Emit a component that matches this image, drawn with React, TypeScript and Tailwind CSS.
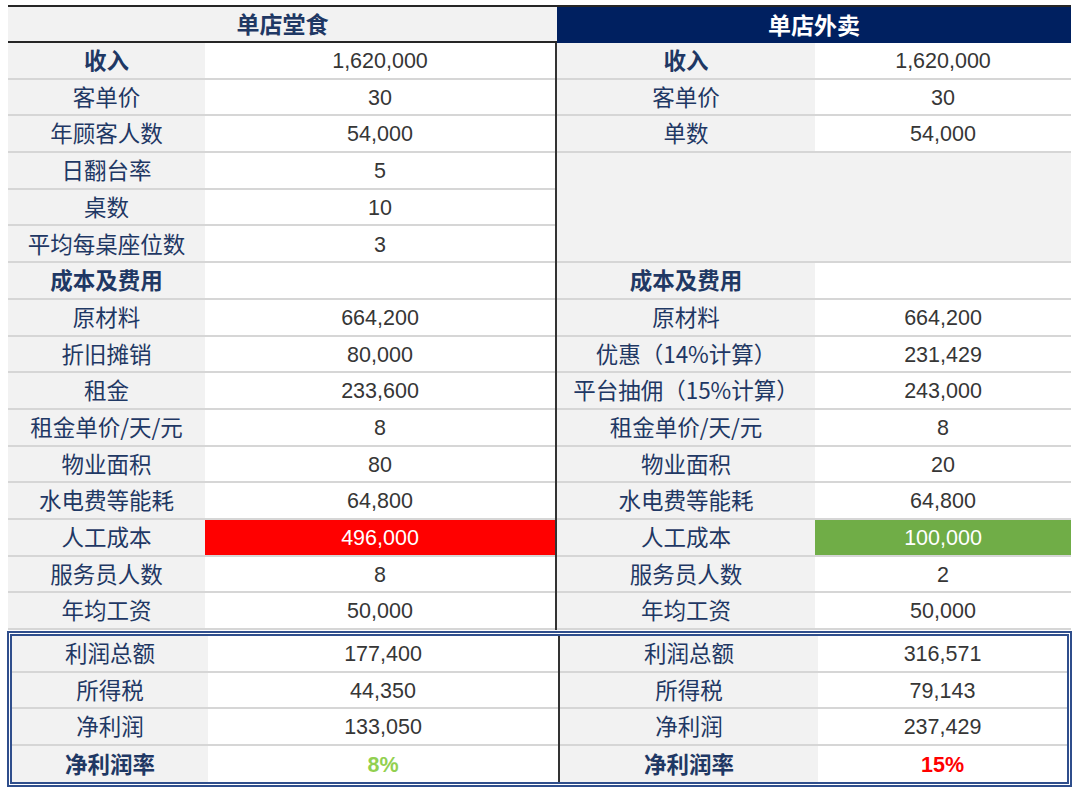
import React from "react";

type Row = {
  label?: string;
  value?: string;
  bold?: boolean;
  cell?: string;
  valueCls?: string;
};

const leftRows: Row[] = [
  { label: "收入", value: "1,620,000", bold: true },
  { label: "客单价", value: "30" },
  { label: "年顾客人数", value: "54,000" },
  { label: "日翻台率", value: "5" },
  { label: "桌数", value: "10" },
  { label: "平均每桌座位数", value: "3" },
  { label: "成本及费用", value: "", bold: true },
  { label: "原材料", value: "664,200" },
  { label: "折旧摊销", value: "80,000" },
  { label: "租金", value: "233,600" },
  { label: "租金单价/天/元", value: "8" },
  { label: "物业面积", value: "80" },
  { label: "水电费等能耗", value: "64,800" },
  { label: "人工成本", value: "496,000", cell: "bg-[#ff0000] text-white" },
  { label: "服务员人数", value: "8" },
  { label: "年均工资", value: "50,000" },
];

const rightRows: Row[] = [
  { label: "收入", value: "1,620,000", bold: true },
  { label: "客单价", value: "30" },
  { label: "单数", value: "54,000" },
  { label: "成本及费用", value: "", bold: true },
  { label: "原材料", value: "664,200" },
  { label: "优惠（14%计算）", value: "231,429" },
  { label: "平台抽佣（15%计算）", value: "243,000" },
  { label: "租金单价/天/元", value: "8" },
  { label: "物业面积", value: "20" },
  { label: "水电费等能耗", value: "64,800" },
  { label: "人工成本", value: "100,000", cell: "bg-[#70ad47] text-white" },
  { label: "服务员人数", value: "2" },
  { label: "年均工资", value: "50,000" },
];

const leftBox: Row[] = [
  { label: "利润总额", value: "177,400" },
  { label: "所得税", value: "44,350" },
  { label: "净利润", value: "133,050" },
  { label: "净利润率", value: "8%", bold: true, valueCls: "font-bold text-[#92d050]" },
];

const rightBox: Row[] = [
  { label: "利润总额", value: "316,571" },
  { label: "所得税", value: "79,143" },
  { label: "净利润", value: "237,429" },
  { label: "净利润率", value: "15%", bold: true, valueCls: "font-bold text-[#ff0000]" },
];

const labelFont = { fontFamily: '"Noto Sans CJK SC", "Liberation Sans", sans-serif' };
const valueFont = { fontFamily: '"Liberation Sans", "Noto Sans CJK SC", sans-serif' };

function TRow({
  r,
  labelW,
  last,
  h,
}: {
  r: Row;
  labelW: string;
  last?: boolean;
  h: string;
}) {
  return (
    <div className={`flex ${h} ${last ? "" : "border-b-2 border-[#d6d6d6]"}`}>
      <div
        className={`${labelW} shrink-0 bg-[#f2f2f2] flex items-center justify-center pb-[2px] text-[22.5px] text-[#1f3864] leading-none whitespace-nowrap ${r.bold ? "font-bold" : ""}`}
        style={labelFont}
      >
        {r.label}
      </div>
      <div
        className={`flex-1 flex items-center justify-center pt-[3px] text-[21.5px] leading-none ${r.cell ?? "bg-white"} ${r.valueCls ?? (r.cell ? "" : "text-[#363636]")}`}
        style={valueFont}
      >
        {r.value}
      </div>
    </div>
  );
}

export default function App() {
  const rowH = "h-[36.7px]";
  const boxH = "h-[36.6px]";
  return (
    <div className="w-[1080px] h-[794px] bg-white pt-[5px] pl-[8px]">
      <div className="w-[1063px]">
        {/* header */}
        <div className="flex h-[38px]">
          <div
            className="w-[549px] bg-[#f2f2f2] border-t-2 border-b-2 border-[#262626] flex items-center justify-center pb-[1px] text-[23px] font-bold text-[#1f3864]"
            style={labelFont}
          >
            单店堂食
          </div>
          <div
            className="flex-1 bg-[#002060] border-t-2 border-[#262626] flex items-center justify-center pb-[1px] text-[23px] font-bold text-white"
            style={labelFont}
          >
            单店外卖
          </div>
        </div>
        {/* body */}
        <div className="flex">
          <div className="w-[549px] border-r-2 border-[#333333]">
            {leftRows.map((r, i) => (
              <TRow key={i} r={r} labelW="w-[197px]" h={rowH} />
            ))}
          </div>
          <div className="flex-1">
            {rightRows.slice(0, 3).map((r, i) => (
              <TRow key={i} r={r} labelW="w-[258px]" h={rowH} />
            ))}
            <div className="h-[110.1px] bg-[#f2f2f2] border-b-2 border-[#d6d6d6]" />
            {rightRows.slice(3).map((r, i) => (
              <TRow key={i} r={r} labelW="w-[258px]" h={rowH} />
            ))}
          </div>
        </div>
        {/* profit box */}
        <div className="flex border-[5px] border-double border-[#2f4e8c] -ml-[1px] -mr-[1px] mt-[1px]">
          <div className="w-[548px] border-r-2 border-[#333333]">
            {leftBox.map((r, i) => (
              <TRow key={i} r={r} labelW="w-[196px]" h={boxH} last={i === leftBox.length - 1} />
            ))}
          </div>
          <div className="flex-1">
            {rightBox.map((r, i) => (
              <TRow key={i} r={r} labelW="w-[258px]" h={boxH} last={i === rightBox.length - 1} />
            ))}
          </div>
        </div>
      </div>
    </div>
  );
}
